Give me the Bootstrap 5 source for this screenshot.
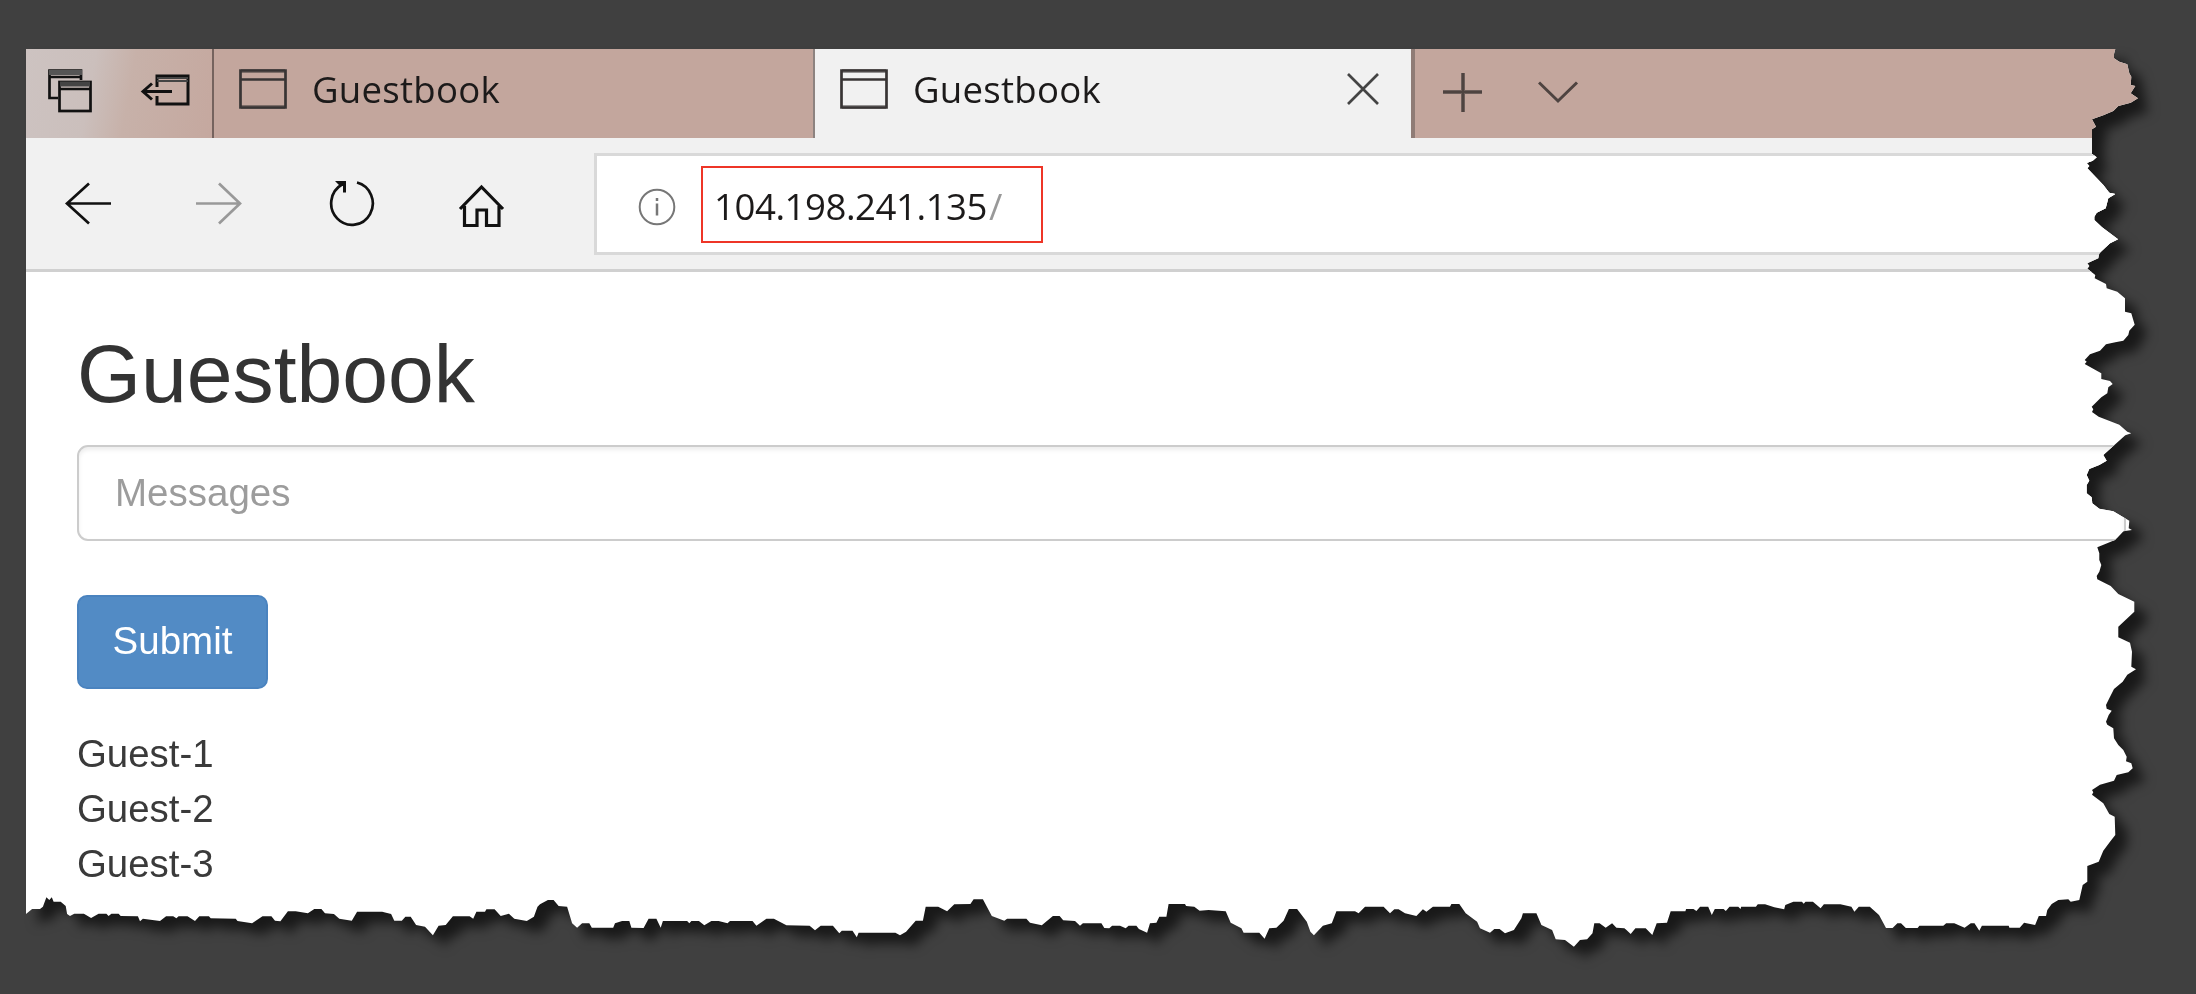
<!DOCTYPE html>
<html lang="en">
<head>
<meta charset="utf-8">
<title>Guestbook</title>
<link href="https://cdn.jsdelivr.net/npm/bootstrap@5.3.0/dist/css/bootstrap.min.css" rel="stylesheet">
<style>
  body { background: #404040; color: #3a3a3a; font-family: "Liberation Sans", Arial, sans-serif; }
  .shade { width: 2196px; height: 994px; filter: drop-shadow(12px 11px 6px rgba(0,0,0,.62)); }
  .torn { height: 994px; padding: 49px 0 0 26px; }
  .window { background: #fff; height: 945px; }
  .window svg { display: block; flex: none; fill: none; stroke: #111; stroke-width: 2.7; }
  .chrome { font-family: "Open Sans", "Noto Sans", sans-serif; font-size: 36.6px; line-height: 50px; color: #1c1a1a; }
  .tabs { height: 89px; background: #c3a69d; }
  .tools-left { width: 188px; padding: 19px 0 0 21px; gap: 47px; background: linear-gradient(100deg, #cdc3c1 0, #cbbfbc 35%, #c7b1a9 55%, #c5a89f 100%); border-right: 2px solid #75635e; }
  .tab-item { padding: 19px 0 0 25px; gap: 25px; }
  .tab-item.first { width: 601px; border-right: 2px solid #8d8380; }
  .tab-item.current { width: 596px; background: #f1f1f1; }
  .tab-item span { margin-top: -9.5px; line-height: 60px; letter-spacing: .25px; }
  .tab-item svg { stroke: #383434; }
  .tab-item .close-x { margin: 4px 31px 0 auto; stroke: #444; }
  .tail { border-left: 4px solid #8f7c76; padding: 23px 0 0 28px; gap: 55px; }
  .tail svg { stroke: #4e4340; stroke-width: 3; }
  .toolbar { height: 134px; background: #f1f1f1; border-bottom: 3px solid #d0d0d0; padding: 15px 0 0 38px; }
  .address { height: 102px; border: 3px solid #d9d9d9; background: #fff; margin-left: 87px; padding: 9.5px 0 0 41px; gap: 25px; }
  .hot { width: 342px; height: 77px; border: 2.5px solid #ee3527; padding-left: 11px; line-height: 76px; letter-spacing: -.45px; }
  .hot span { color: #999; margin-left: 2px; }
  .content { padding: 55.5px 0 0 51px; font-size: 38.4px; line-height: 55.1px; }
  .content h1 { font-size: 82.3px; line-height: 90px; margin: 0 0 27.500px; font-weight: 400; color: #333; }
  .content .form-control { width: 2049px; height: 95.5px; font-size: 38.5px; border: 2.5px solid #ccc; border-radius: 11px; padding: 0 36px; box-shadow: inset 0 3px 4px rgba(0,0,0,.075); }
  .content .form-control::placeholder { color: #9c9c9c; opacity: 1; }
  .content .btn { --bs-btn-bg: #528bc5; --bs-btn-border-color: #4a83bf; width: 191px; height: 93.5px; border-width: 2.5px; border-radius: 10px; font-size: 38.5px; margin: 54.500px 0 37px; padding: 0 0 1px; }
</style>
</head>
<body class="overflow-hidden">
<div class="shade">
<main class="torn" id="torn">
<div class="window overflow-hidden">
  <header class="chrome">
    <nav class="tabs d-flex">
      <div class="tools-left d-flex flex-shrink-0">
        <svg width="46" height="46" stroke-width="3"><path d="M11 30H2.500V2.500H34V12" /><path d="M2 4.500H35" stroke="#555" stroke-width="5"/><path d="M3 9H34"/><rect x="12.500" y="14" width="31" height="29"/><path d="M13 16H43" stroke="#444" stroke-width="5"/><path d="M12 21H43"/></svg>
        <svg width="50" height="40" viewBox="0 0 50 40"><path d="M17 19V8H48V36H17V28" stroke-width="3"/><path d="M17 13H48M17 10H48" stroke="#444" stroke-width="2"/><path d="M32 23.500H3M12 15.500L3 23.500L12 31.500" stroke-width="3"/></svg>
      </div>
      <div class="tab-item first d-flex flex-shrink-0">
        <svg width="48" height="42"><path d="M1.500 2.500H46.500V39.500H1.500ZM2 11.500H46"/><path d="M2 3H46M2 39H46" stroke-opacity=".5" stroke-width="4"/></svg>
        <span>Guestbook</span>
      </div>
      <div class="tab-item current d-flex flex-shrink-0">
        <svg width="48" height="42"><path d="M1.500 2.500H46.500V39.500H1.500ZM2 11.500H46"/><path d="M2 3H46M2 39H46" stroke-opacity=".5" stroke-width="4"/></svg>
        <span>Guestbook</span>
        <svg class="close-x" width="34" height="34"><path d="M2 2L32 32M32 2L2 32"/></svg>
      </div>
      <div class="tail d-flex flex-grow-1">
        <svg width="40" height="40"><path d="M0 20H39M20 1V40" stroke-width="4" stroke="#6c5e5a"/><path d="M0 20H39M20 1V40" stroke-width="2"/></svg>
        <svg width="41" height="40"><path d="M1 10.500L20 29L39 10.500"/></svg>
      </div>
    </nav>
    <div class="toolbar d-flex">
      <svg class="mt-4" width="50" height="54"><path d="M47 26.500H3M25 6.500L3 26.500L25 46.500"/></svg>
      <svg class="mt-4" style="margin-left:81px" width="50" height="54"><path d="M1 26.500H45M24 6.500L45 26.500L24 46.500" stroke="#999"/></svg>
      <svg class="mt-4" style="margin-left:81px" width="50" height="54"><path d="M31 5.500A20.800 21.500 0 1 1 16 7.500"/><path d="M9 4H20V15.500H17V9L14 9Z" fill="#111" stroke="none"/></svg>
      <svg class="mt-4" style="margin-left:81px" width="50" height="54"><path d="M3 32L24.500 10L46 32M7.500 29V48.500H20V33H29.500V48.500H42V29" stroke-width="3.200"/></svg>
      <div class="address d-flex flex-grow-1">
        <svg style="margin-top:22px" width="38" height="40"><circle cx="19" cy="19" r="17.300" stroke="#777" stroke-width="2"/><path d="M19 15.500V27.500M19 10V13" stroke="#777" stroke-width="2.500"/></svg>
        <div class="hot text-nowrap">104.198.241.135<span>/</span></div>
      </div>
    </div>
  </header>
  <section class="content">
    <h1>Guestbook</h1>
    <input class="form-control" type="text" placeholder="Messages">
    <button class="btn btn-primary d-block" type="button">Submit</button>
    <div>Guest-1</div>
    <div>Guest-2</div>
    <div>Guest-3</div>
  </section>
</div>
</main>
</div>
<script src="https://cdn.jsdelivr.net/npm/bootstrap@5.3.0/dist/js/bootstrap.bundle.min.js"></script>
<script>
// Outline of the torn paper, clockwise. Each run: origin x, origin y, x scale, y scale, points.
const runs = [
[2040,30,3,3,"226,57 222,72 222,85 238,95 262,103 268,130 274,140 272,165 286,168 272,190 294,205 272,218 235,228 220,243 190,256 156,268 168,290 156,298 156,330 156,372 170,382 158,392 140,399 148,408 142,415 190,465 208,488 226,492 205,505 197,535 170,548 163,560 163,570 186,592 234,628 210,640 178,670 175,685 142,700 148,708 142,716 166,735 164,745 198,762 200,775 232,785 255,805 255,845"],
[2040,310,3,3,"274,10 284,44 268,62 265,75 250,92 226,97 198,103 180,122 150,133 134,150 140,155 134,162 184,190 184,207 210,213 218,222 205,232 202,250 184,262 155,290 160,298 156,306 176,320 238,344 262,365 274,370 256,376 190,435 200,452 178,465 148,477 140,495 148,512 140,525 140,550 155,562 157,580 178,596 220,604 268,632 266,655 276,660 250,664 225,690 196,702 172,712 178,730 178,750 184,765 178,785 170,798 172,808 212,828 235,852"],
[2040,590,3,3,"283,35 283,65 235,110 235,142 270,158 276,185 274,230 288,238 262,254 248,275 222,297 208,325 198,345 200,356 215,362 206,375 198,395 202,404 220,415 222,445 235,465 250,480 260,500 258,514 274,520 278,535 265,547 230,555 222,572 180,584 156,600 160,607 156,614 190,640 208,672 224,680 226,735 210,755 190,782 176,815 142,828 142,875 128,885 118,930 92,935 85,928 55,930 35,942 22,960 18,978"],
[1620,860,2.722,3,"1140,168 1130,195 1100,188 1088,203 1060,203 1058,197 985,197 978,212 965,190 955,190 938,203 910,190 888,190 880,197 815,197 810,204 778,204 765,190 755,190 742,204 724,204 705,165 680,140 650,140 638,155 630,140 600,133 555,133 546,145 525,125 505,125 500,131 495,125 472,125 450,135 447,148 420,142 395,133 375,133 370,140 330,140 328,147 322,140 298,140 288,153 282,147 258,147 250,165 240,140 218,140 208,153 200,147 180,147 178,154 138,154 128,188 100,190 88,225 70,205 40,205 28,220 12,205"],
[1080,860,2.8,3,"1555,205 1542,222 1525,205 1502,203 1490,190 1472,203 1455,190 1440,190 1435,220 1420,238 1400,240 1383,260 1358,240 1332,238 1322,210 1292,195 1278,160 1240,160 1236,175 1215,210 1190,220 1175,207 1160,207 1148,218 1120,205 1112,185 1080,160 1062,132 1040,132 1036,140 988,140 970,155 960,148 942,168 910,160 892,148 880,148 868,160 850,140 798,140 780,160 770,154 718,154 705,190 680,197 655,226 645,215 635,185 608,147 585,147 570,182 550,203 530,205 517,236 502,218 458,218 452,205 422,188 408,154 360,150 335,152 320,140 297,138 294,132 248,132 242,170 222,170 214,188 196,190 188,218 165,207 158,197 136,197 128,205 112,197 90,197 82,205 68,204 60,190 8,190"],
[540,860,2.8,3,"1512,197 1498,183 1465,181 1455,168 1436,168 1405,196 1372,188 1362,176 1308,176 1300,182 1265,168 1240,118 1214,118 1205,132 1160,133 1140,154 1115,140 1080,140 1072,182 1052,182 1025,215 1008,226 995,218 892,218 887,232 875,212 845,212 838,220 820,197 786,197 770,211 755,197 690,196 655,176 634,176 606,197 595,183 532,183 525,190 500,183 480,183 460,196 445,183 424,183 418,190 412,183 344,183 338,203 326,176 304,176 290,204 256,203 250,183 230,183 210,190 205,203 145,203 138,190 118,190 104,203 90,190 76,140 52,138 38,120 22,120 0,133"],
[0,860,2.8,3,"1505,140 1495,170 1475,183 1440,176 1425,161 1402,168 1385,148 1362,148 1358,155 1334,155 1325,176 1315,169 1268,169 1248,195 1228,197 1212,226 1190,200 1165,195 1150,170 1135,170 1125,182 1104,182 1095,162 1070,155 1000,155 985,182 950,176 935,162 910,160 900,147 880,147 862,160 828,154 806,154 785,184 770,182 760,169 735,169 706,190 665,183 660,176 590,175 585,169 558,169 546,183 525,169 500,169 494,175 485,169 465,169 448,183 400,176 392,184 386,169 338,168 332,161 312,161 304,168 298,161 276,161 255,174 235,161 208,161 196,168 188,162 184,138 170,125 150,125 145,112 138,120 130,112 120,140 112,147 90,147 72,163"]
];
const points = ["26px 49px"];
for (const [ox, oy, sx, sy, list] of runs)
  for (const p of list.split(" ")) {
    const [x, y] = p.split(",").map(Number);
    points.push((ox + x / sx).toFixed(1) + "px " + (oy + y / sy).toFixed(1) + "px");
  }
document.getElementById("torn").style.clipPath = "polygon(" + points.join(",") + ")";
</script>
</body>
</html>
